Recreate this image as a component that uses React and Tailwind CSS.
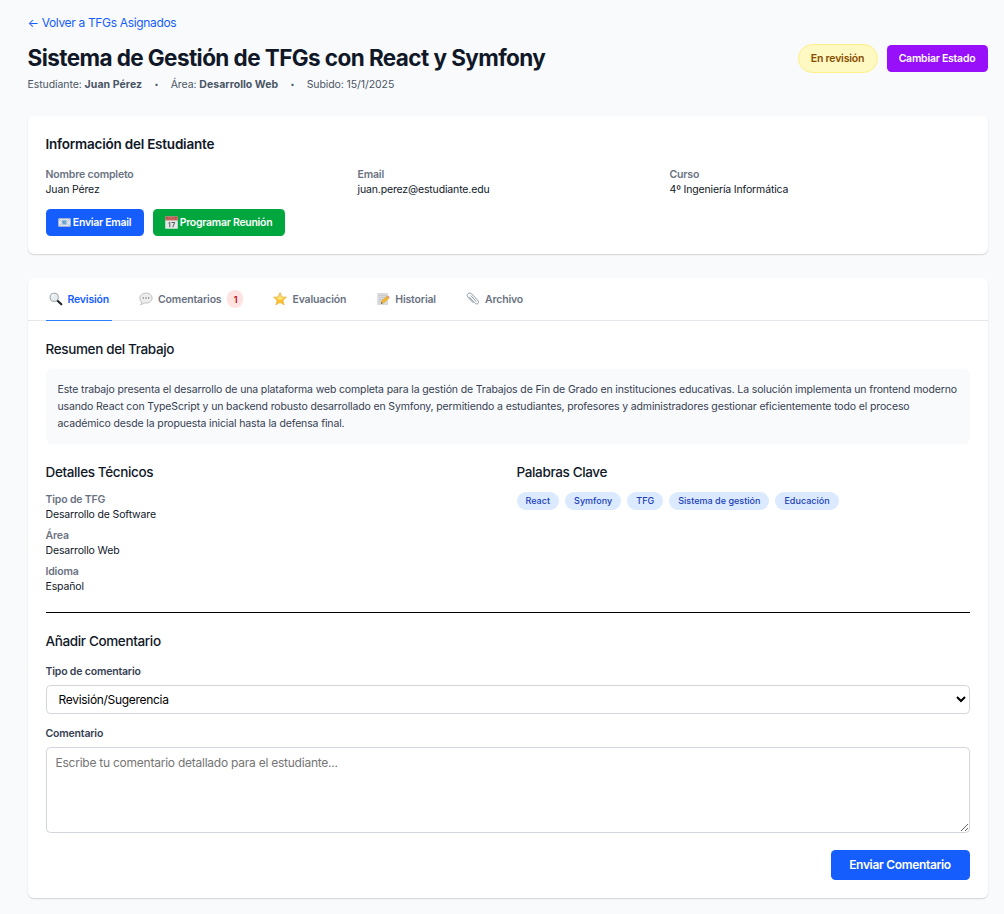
import React from "react";

const MailIcon = () => (
  <svg width="13" height="13" viewBox="0 0 14 13" className="shrink-0">
    <rect x="0.5" y="2.2" width="13" height="8.6" rx="0.6" fill="#e3e6ea" stroke="#b4bac4" strokeWidth="0.6" />
    <path d="M.8 2.6 5.2 6.6.8 10.4M13.2 2.6 8.8 6.6l4.4 3.8" fill="none" stroke="#a8afbb" strokeWidth="0.7" />
    <rect x="4.4" y="3.6" width="5.2" height="5.6" fill="#9fc7e8" />
    <path d="M7.9 7.4H6.4a1.3 1.3 0 1 1 1.5-1.2v.9" fill="none" stroke="#3f83b9" strokeWidth="0.9" />
  </svg>
);

const CalendarIcon = () => (
  <svg width="13" height="13" viewBox="0 0 13 13" className="shrink-0">
    <rect x="0.2" y="0.4" width="12.6" height="12.4" rx="0.5" fill="#e4e7e5" />
    <rect x="0.2" y="0.4" width="12.6" height="4" fill="#c5615a" />
    <path d="M2.2 1v1.200M10.800 1v1.200" stroke="#8d3c38" strokeWidth="0.9" />
    <path d="M3.500 7.100l1.300-.8v4.900M6.500 6.500h3.200l-2 4.700" fill="none" stroke="#55595b" strokeWidth="1" />
  </svg>
);

const SearchIcon = () => (
  <svg width="14" height="14" viewBox="0 0 14 14" className="shrink-0">
    <path d="M8.3 8.5l4 3.8" stroke="#25282b" strokeWidth="2.2" strokeLinecap="round" />
    <circle cx="5.2" cy="5.3" r="4.1" fill="#e6ecef" stroke="#999fa3" strokeWidth="1" />
    <path d="M2.8 5a2.6 2.6 0 0 1 2.5-2.3" fill="none" stroke="#ffffff" strokeWidth="1" />
  </svg>
);

const BubbleIcon = () => (
  <svg width="14" height="14" viewBox="0 0 14 14" className="shrink-0">
    <path d="M7 1.1c3.5 0 6.100 2.100 6.100 5s-2.600 5-6.100 5c-.7 0-1.300-.1-1.900-.2-.8.8-2 1.500-3.500 1.600.7-.7 1.100-1.500 1-2.500C1.500 9.100.9 7.700.9 6.100c0-2.900 2.600-5 6.100-5z" fill="#ededee" stroke="#b0b3b6" strokeWidth="0.8" />
    <circle cx="4.3" cy="6.1" r="0.75" fill="#6f7377" />
    <circle cx="7" cy="6.1" r="0.75" fill="#6f7377" />
    <circle cx="9.7" cy="6.1" r="0.75" fill="#6f7377" />
  </svg>
);

const StarIcon = () => (
  <svg width="14" height="14" viewBox="0 0 14 14" className="shrink-0">
    <path d="M7 .6l1.800 4.300 4.700.3-3.600 3 1.200 4.700L7 10.400l-4.100 2.500 1.200-4.700L.5 5.200l4.700-.3z" fill="#fcc42c" stroke="#e0a63f" strokeWidth="0.6" strokeLinejoin="round" />
    <path d="M7 2.3l1.1 3.2 3.1.3L7 8 3 5.800l2.900-.3z" fill="#ffe680" />
  </svg>
);

const MemoIcon = () => (
  <svg width="14" height="14" viewBox="0 0 14 14" className="shrink-0">
    <rect x="1.3" y="1" width="10.8" height="12" fill="#d8dadb" />
    <path d="M2.800 3.500h7.500M2.800 5.500h6M2.800 7.500h4M2.800 9.500h3" stroke="#c3c6c8" strokeWidth="0.7" />
    <path d="M5.3 11.400l.8-2.900 4.800-4.300 2 2.100-4.900 4.300z" fill="#f6b92c" stroke="#c98a1c" strokeWidth="0.4" />
    <path d="M10.900 4.200l.9-.8 2 2-.9.900z" fill="#e58a8a" />
    <path d="M5 11.800l.5-1.500 1.100 1.100z" fill="#3f3a33" />
  </svg>
);

const ClipIcon = () => (
  <svg width="14" height="14" viewBox="0 0 14 14" className="shrink-0">
    <path d="M3.5 5.2l5.300 5.900c1 1 2.400 1.100 3.200.3s.7-2-.2-3L5.700 1.900C4.700.9 3.100.7 2 1.600s-1 2.400-.1 3.400l5 5.500M5 3.800l5.200 5.700" fill="none" stroke="#8d9aa6" strokeWidth="1" strokeLinecap="round" />
  </svg>
);

const tabs = [
  { label: "Revisión", Icon: SearchIcon, active: true },
  { label: "Comentarios", Icon: BubbleIcon, badge: "1" },
  { label: "Evaluación", Icon: StarIcon },
  { label: "Historial", Icon: MemoIcon },
  { label: "Archivo", Icon: ClipIcon },
];

const student = [
  ["Nombre completo", "Juan Pérez"],
  ["Email", "juan.perez@estudiante.edu"],
  ["Curso", "4º Ingeniería Informática"],
];

const details = [
  ["Tipo de TFG", "Desarrollo de Software"],
  ["Área", "Desarrollo Web"],
  ["Idioma", "Español"],
];

const keywords = ["React", "Symfony", "TFG", "Sistema de gestión", "Educación"];

const Field = ({ label, value }) => (
  <div>
    <dt className="font-semibold tracking-[-0.17px] text-[#6a7282]">{label}</dt>
    <dd className="tracking-[-0.15px] text-[#101828]">{value}</dd>
  </div>
);

const Heading = ({ children }) => (
  <h3 className="text-[13.5px] leading-[21px] font-medium tracking-[-0.36px] text-[#101828]">{children}</h3>
);

const Dot = () => <span className="w-[4.5px] text-center text-[7px]">•</span>;

export default function App() {
  return (
    <div className="h-[914px] w-[1004px] overflow-hidden bg-[#f9fafb] pt-[13.5px] pl-[27.5px] font-['Inter',sans-serif] text-[10.5px] leading-[15px]">
      <div className="w-[960px]">
        <header className="mb-6 flex items-start justify-between">
          <div>
            <a href="#" className="block text-[12px] leading-[18px] tracking-[-0.34px] text-[#155dfc]">← Volver a TFGs Asignados</a>
            <h1 className="mt-3 text-[22.5px] leading-[27px] font-bold tracking-[-0.58px] whitespace-nowrap text-[#101828]">
              Sistema de Gestión de TFGs con React y Symfony
            </h1>
            <div className="mt-[6px] flex gap-3 tracking-[-0.08px] text-[#4a5565]">
              <span>Estudiante: <strong className="font-bold tracking-[0.08px]">Juan Pérez</strong></span>
              <Dot />
              <span>Área: <strong className="font-bold tracking-[0.02px]">Desarrollo Web</strong></span>
              <Dot />
              <span>Subido: 15/1/2025</span>
            </div>
          </div>
          <div className="mt-[30.5px] flex items-center gap-[9px] tracking-[-0.2px]">
            <span className="flex h-[29px] w-[80px] items-center justify-center rounded-full border border-[#fff085] bg-[#fef9c2] font-semibold text-[#894b00]">En revisión</span>
            <button className="h-[27px] w-[101px] rounded-[4.5px] bg-[#9810fa] font-semibold tracking-[-0.25px] text-white">Cambiar Estado</button>
          </div>
        </header>

        <section className="mb-6 h-[138px] rounded-[6px] bg-white p-[18px] shadow-[0_1px_2px_rgba(0,0,0,0.1),0_1px_1px_rgba(0,0,0,0.06)]">
          <h2 className="text-[13.5px] leading-[21px] font-semibold tracking-[-0.22px] text-[#101828]">Información del Estudiante</h2>
          <dl className="mt-3 grid grid-cols-3 gap-3">
            {student.map(([label, value]) => <Field key={label} label={label} value={value} />)}
          </dl>
          <div className="mt-3 flex gap-[9px] font-semibold tracking-[-0.28px] text-white">
            <button className="flex h-[27px] w-[98px] items-center justify-center gap-[2px] rounded-[4.5px] bg-[#155dfc]"><MailIcon />Enviar Email</button>
            <button className="flex h-[27px] w-[132px] items-center justify-center gap-[2px] rounded-[4.5px] bg-[#00a63e]"><CalendarIcon />Programar Reunión</button>
          </div>
        </section>

        <section className="h-[620.5px] rounded-[6px] bg-white shadow-[0_1px_2px_rgba(0,0,0,0.1),0_1px_1px_rgba(0,0,0,0.06)]">
          <nav className="flex h-[43px] gap-6 border-b border-[#e5e7eb] px-[18px]">
            {tabs.map(({ label, Icon, active, badge }) => (
              <button
                key={label}
                className={active
                  ? "flex h-[43px] items-center gap-[5px] border-b border-[#2b7fff] px-[3px] pt-px font-semibold tracking-[-0.18px] text-[#155dfc]"
                  : "flex h-[43px] items-center gap-[5px] border-b border-transparent px-[3px] pt-px font-semibold tracking-[-0.16px] text-[#6a7282]"}
              >
                <Icon />
                <span>{label}</span>
                {badge && <span className="ml-px flex h-[18px] w-4 items-center justify-center rounded-full bg-[#ffe2e2] text-[9px] text-[#c10007]">{badge}</span>}
              </button>
            ))}
          </nav>

          <div className="p-[18px]">
            <Heading>Resumen del Trabajo</Heading>
            <p className="mt-[9px] h-[75px] rounded-[6px] bg-[#f9fafb] p-3 leading-[17.06px] tracking-[-0.136px] whitespace-nowrap text-[#364153]">
              Este trabajo presenta el desarrollo de una plataforma web completa para la gestión de Trabajos de Fin de Grado en instituciones educativas. La solución implementa un frontend moderno<br />
              usando React con TypeScript y un backend robusto desarrollado en Symfony, permitiendo a estudiantes, profesores y administradores gestionar eficientemente todo el proceso<br />
              académico desde la propuesta inicial hasta la defensa final.
            </p>

            <div className="mt-[18px] grid grid-cols-2 gap-[18px]">
              <div>
                <Heading>Detalles Técnicos</Heading>
                <dl className="mt-[9px] flex flex-col gap-[6px]">
                  {details.map(([label, value]) => <Field key={label} label={label} value={value} />)}
                </dl>
              </div>
              <div>
                <Heading>Palabras Clave</Heading>
                <div className="mt-[9px] flex gap-[6px]">
                  {keywords.map((word) => (
                    <span key={word} className="flex h-[18px] items-center rounded-full bg-[#dbeafe] px-[9px] text-[9px] font-medium tracking-[0.02px] text-[#193cb8]">{word}</span>
                  ))}
                </div>
              </div>
            </div>

            <form className="mt-[18px] border-t border-black pt-[18px]">
              <Heading>Añadir Comentario</Heading>
              <label className="mt-3 block font-semibold tracking-[-0.18px] text-[#364153]">Tipo de comentario</label>
              <select className="mt-[6px] block h-[29px] w-full rounded-[4.5px] border border-[#d1d5dc] bg-white px-2 text-[12px] tracking-[-0.3px] text-black">
                <option>Revisión/Sugerencia</option>
              </select>
              <label className="mt-3 block font-semibold tracking-[-0.18px] text-[#364153]">Comentario</label>
              <textarea
                className="mt-[6px] block h-[86px] w-full resize rounded-[4.5px] border border-[#d1d5dc] px-[9px] py-[6px] text-[12px] leading-[18px] tracking-[-0.24px] placeholder:text-[#757575]"
                placeholder="Escribe tu comentario detallado para el estudiante..."
              />
              <div className="mt-[17px] flex justify-end">
                <button type="button" className="h-[30px] w-[139px] rounded-[4.5px] bg-[#155dfc] text-[12px] font-semibold tracking-[-0.32px] text-white">Enviar Comentario</button>
              </div>
            </form>
          </div>
        </section>
      </div>
    </div>
  );
}
